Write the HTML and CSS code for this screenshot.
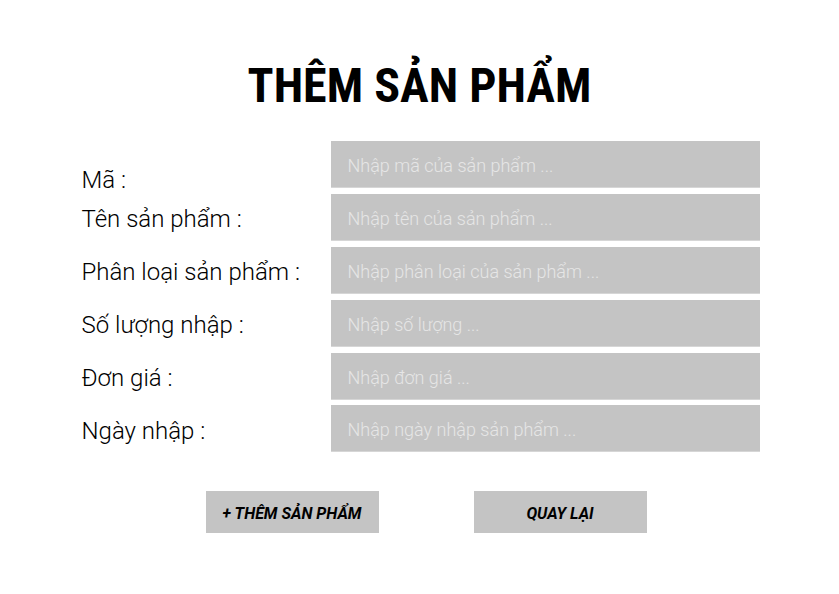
FILE: index.html
```html
<!DOCTYPE html>
<html lang="vi">
<head>
<meta charset="utf-8">
<title>Thêm sản phẩm</title>
<link rel="stylesheet" href="styles.css">
</head>
<body>
<main class="page">
  <h1 class="title">THÊM SẢN PHẨM</h1>
  <form class="form">
    <div class="row">
      <label class="label label--first" for="ma">Mã :</label>
      <input class="field" id="ma" type="text" placeholder="Nhập mã của sản phẩm ...">
    </div>
    <div class="row">
      <label class="label" for="ten">Tên sản phẩm :</label>
      <input class="field" id="ten" type="text" placeholder="Nhập tên của sản phẩm ...">
    </div>
    <div class="row">
      <label class="label" for="loai">Phân loại sản phẩm :</label>
      <input class="field" id="loai" type="text" placeholder="Nhập phân loại của sản phẩm ...">
    </div>
    <div class="row">
      <label class="label" for="sl">Số lượng nhập :</label>
      <input class="field" id="sl" type="text" placeholder="Nhập số lượng ...">
    </div>
    <div class="row">
      <label class="label" for="gia">Đơn giá :</label>
      <input class="field" id="gia" type="text" placeholder="Nhập đơn giá ...">
    </div>
    <div class="row">
      <label class="label" for="ngay">Ngày nhập :</label>
      <input class="field" id="ngay" type="text" placeholder="Nhập ngày nhập sản phẩm ...">
    </div>
    <div class="actions">
      <button class="btn" type="submit">+ THÊM SẢN PHẨM</button>
      <button class="btn" type="button">QUAY LẠI</button>
    </div>
  </form>
</main>
</body>
</html>
```
FILE: styles.css
```css
html, body {
  margin: 0;
  padding: 0;
  background: #ffffff;
}

body {
  font-family: Roboto, "Liberation Sans", sans-serif;
  color: #000;
}

.page {
  width: 839px;
  height: 594px;
  display: flex;
  flex-direction: column;
  align-items: center;
}

.title {
  margin: 58px 0 0;
  font-family: "Roboto Condensed", Roboto, "Liberation Sans Narrow", sans-serif;
  font-stretch: condensed;
  font-size: 48px;
  line-height: 56px;
  font-weight: 700;
  letter-spacing: 0;
}

.form {
  margin-top: 27px;
  width: 678px;
  margin-left: 2px;
  display: flex;
  flex-direction: column;
  gap: 5.9px;
}

.row {
  display: flex;
  align-items: center;
  height: 47px;
}

.label {
  width: 249px;
  padding-top: 4px;
  font-size: 24px;
  font-weight: 300;
  line-height: 28px;
}

.label--first {
  padding-top: 30px;
}

.field {
  width: 429px;
  height: 47px;
  box-sizing: border-box;
  border: none;
  border-bottom: 1px solid #d6d6d6;
  background: #c4c4c4;
  padding: 3px 0 0 17px;
  margin: 0;
  font-family: Roboto, "Liberation Sans", sans-serif;
  font-size: 18px;
  font-weight: 300;
  color: #333;
  outline: none;
}

.field::placeholder {
  color: #e6e6e6;
  opacity: 1;
}

.actions {
  margin-top: 32.5px;
  display: flex;
  justify-content: flex-start;
  gap: 95px;
  padding-left: 124px;
}

.btn {
  width: 173px;
  height: 42px;
  border: none;
  background: #c4c4c4;
  font-family: Roboto, "Liberation Sans", sans-serif;
  font-size: 16px;
  font-weight: 700;
  font-style: italic;
  color: #000;
  padding: 3px 0 0;
}
```
